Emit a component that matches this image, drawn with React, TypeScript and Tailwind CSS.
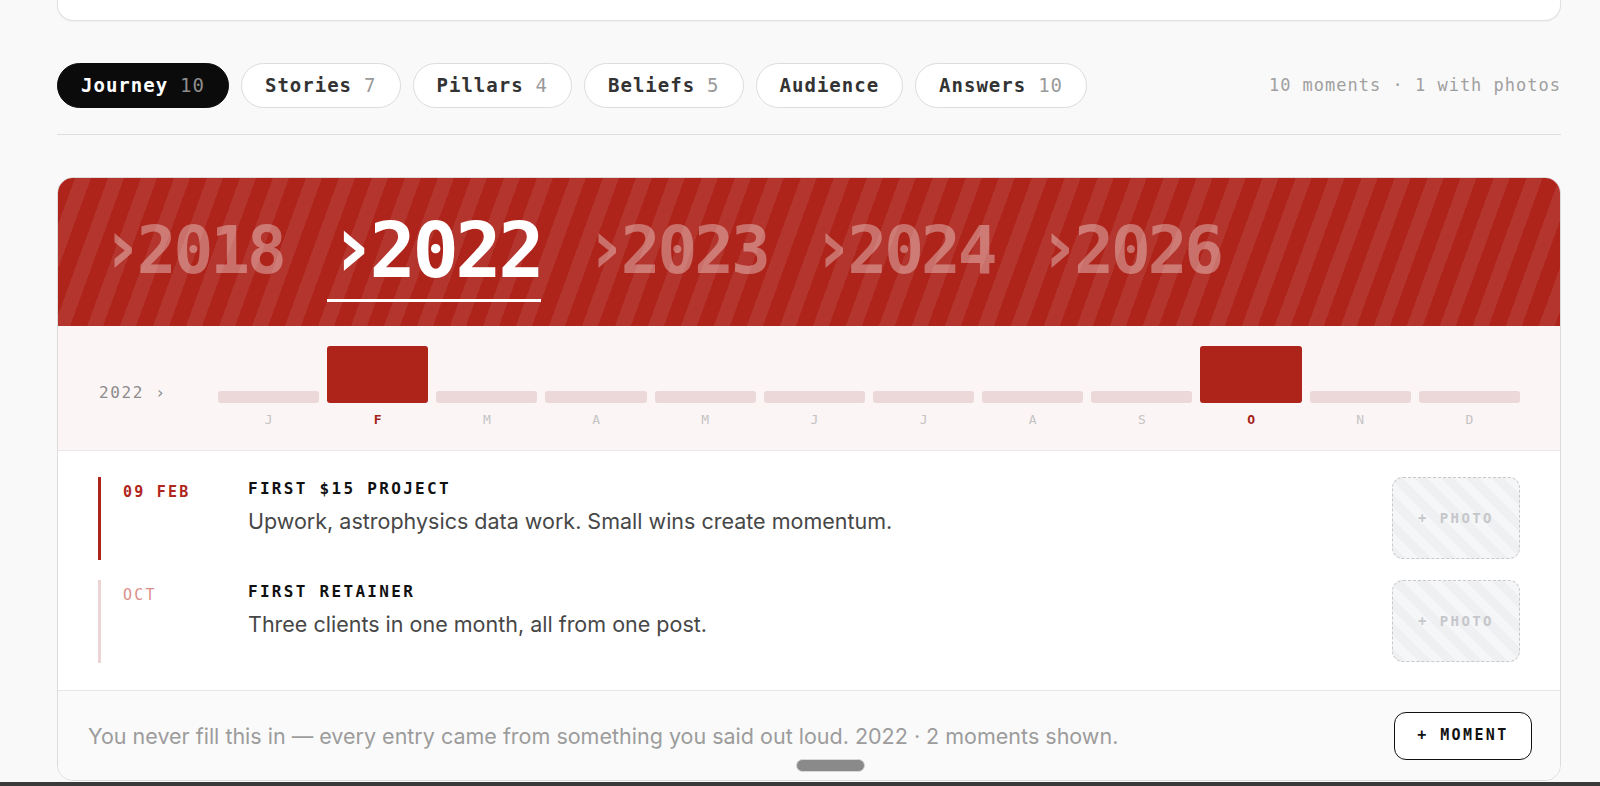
import React from "react"

const mono = "font-['DejaVu_Sans_Mono',monospace]"

const tabs = [
  { label: "Journey", count: "10", active: true },
  { label: "Stories", count: "7" },
  { label: "Pillars", count: "4" },
  { label: "Beliefs", count: "5" },
  { label: "Audience" },
  { label: "Answers", count: "10" },
]

const years = ["2018", "2022", "2023", "2024", "2026"]
const months = ["J", "F", "M", "A", "M", "J", "J", "A", "S", "O", "N", "D"]
const filled = [1, 9]

const moments = [
  { date: "09 FEB", title: "FIRST $15 PROJECT", body: "Upwork, astrophysics data work. Small wins create momentum.", current: true },
  { date: "OCT", title: "FIRST RETAINER", body: "Three clients in one month, all from one post.", current: false },
]

function PhotoSlot() {
  return (
    <div className="flex h-[82px] w-[128px] shrink-0 items-center justify-center rounded-[11px] border-[1.5px] border-dashed border-[#c9c9cc] bg-[#eef0f2] bg-[image:repeating-linear-gradient(45deg,#eef0f2_0_9px,#f5f6f8_9px_18px)]">
      <span className={`${mono} text-[14px] font-bold tracking-[2.4px] text-[#c6c7ca]`}>+ PHOTO</span>
    </div>
  )
}

export default function App() {
  return (
    <div className="relative min-h-screen bg-[#f9f9f9] font-['Inter',sans-serif]">
      <div className="ml-[57px] w-[1504px]">
        {/* tail of the card above */}
        <div className="h-[21px] rounded-b-2xl border-x border-b border-[#e0e0e0] bg-white shadow-[0_1px_2px_rgba(0,0,0,0.04)]" />

        {/* tab strip */}
        <div className="mt-[42px] flex items-center justify-between border-b border-[#dedede] pb-[26px]">
          <div className="flex items-center gap-[12px]">
            {tabs.map((t) => (
              <button
                key={t.label}
                className={`${mono} flex h-[45px] items-center rounded-full border px-[23px] text-[19px] font-semibold tracking-[1px] ${
                  t.active ? "border-[#0b0b0b] bg-[#0b0b0b] text-white" : "border-[#dcdcdc] bg-white text-[#333]"
                }`}
              >
                {t.label}
                {t.count && <span className={`ml-[12px] font-normal ${t.active ? "text-[#8d8d8d]" : "text-[#9a9a9a]"}`}>{t.count}</span>}
              </button>
            ))}
          </div>
          <div className={`${mono} text-[17px] tracking-[1px] text-[#a0a0a0]`}>10 moments · 1 with photos</div>
        </div>

        {/* journey card */}
        <div className="mt-[42px] overflow-hidden rounded-2xl border border-[#dcdcdc] bg-white">
          {/* year banner */}
          <div className="flex h-[148px] items-center gap-[43px] bg-[#ae241b] bg-[image:repeating-linear-gradient(110deg,transparent_0_16px,rgba(255,255,255,0.08)_16px_31px)] pl-[42px] pt-[10px]">
            {years.map((y) => {
              const active = y === "2022"
              return (
                <div key={y} className="flex flex-col">
                  <span
                    className={`${mono} font-bold leading-none ${
                      active ? "text-[77px] tracking-[-3.5px] text-white" : "text-[66px] tracking-[-3px] text-white/35"
                    }`}
                  >
                    <span className="inline-block origin-[20%_85%] scale-[1.15]">›</span>
                    {y}
                  </span>
                  <div className={`mt-[10px] h-[3px] ${active ? "bg-white" : "bg-transparent"}`} />
                </div>
              )
            })}
          </div>

          {/* month strip */}
          <div className="border-b border-[#eee6e6] bg-[#fcf5f5] px-[40px] pb-[24px] pt-[20px]">
            <div className="flex items-end">
              <div className={`${mono} w-[120px] shrink-0 pl-[1px] text-[16px] leading-[20px] tracking-[1.6px] text-[#8c8c8c]`}>2022 ›</div>
              <div className="grid h-[57px] flex-1 grid-cols-12 items-end gap-x-[8px]">
                {months.map((m, i) => (
                  <div
                    key={i}
                    className={`rounded-[3px] ${filled.includes(i) ? "h-[57px] bg-[#ae241b]" : "h-[12px] bg-[#ecd8d8]"}`}
                  />
                ))}
              </div>
            </div>
            <div className="mt-[11px] flex">
              <div className="w-[120px] shrink-0" />
              <div className="grid flex-1 grid-cols-12 gap-x-[8px]">
                {months.map((m, i) => (
                  <div
                    key={i}
                    className={`${mono} text-center text-[13px] leading-[12px] ${
                      filled.includes(i) ? "font-bold text-[#a3221a]" : "text-[#c4c4c4]"
                    }`}
                  >
                    {m}
                  </div>
                ))}
              </div>
            </div>
          </div>

          {/* moments */}
          <div className="flex flex-col gap-[20px] px-[40px] pb-[27px] pt-[26px]">
            {moments.map((m) => (
              <div
                key={m.title}
                className={`flex h-[83px] items-start border-l-[3px] pl-[22px] ${m.current ? "border-[#ae241b]" : "border-[#ecd4d4]"}`}
              >
                <div
                  className={`${mono} mt-[5px] w-[125px] shrink-0 text-[15px] leading-[20px] tracking-[2.2px] ${
                    m.current ? "font-bold text-[#b0261d]" : "font-normal text-[#dc8f8a]"
                  }`}
                >
                  {m.date}
                </div>
                <div className="flex-1 pt-[2px]">
                  <div className={`${mono} text-[16px] font-bold leading-[20px] tracking-[2.3px] text-[#111]`}>{m.title}</div>
                  <div className="mt-[8px] text-[21.5px] leading-[28px] text-[#474747]">{m.body}</div>
                </div>
                <PhotoSlot />
              </div>
            ))}
          </div>

          {/* footer */}
          <div className="flex h-[90px] items-center justify-between border-t border-[#e6e6e6] bg-[#fafafa] pl-[30px] pr-[28px]">
            <p className="pt-[2px] text-[21.5px] text-[#9c9c9c]">
              You never fill this in — every entry came from something you said out loud. 2022 · 2 moments shown.
            </p>
            <button
              className={`${mono} flex h-[48px] w-[138px] items-center justify-center rounded-[12px] border-[1.5px] border-[#111] bg-white text-[15px] font-bold tracking-[2.4px] text-[#111]`}
            >
              + MOMENT
            </button>
          </div>
        </div>
      </div>

      {/* scroll handle + window edge */}
      <div className="absolute left-[796px] top-[759px] h-[13px] w-[69px] rounded-full border border-[#d8d8d8] bg-[#8a8a8a]" />
      <div className="fixed inset-x-0 bottom-0 h-[4px] bg-[#3a3a3a]" />
    </div>
  )
}
